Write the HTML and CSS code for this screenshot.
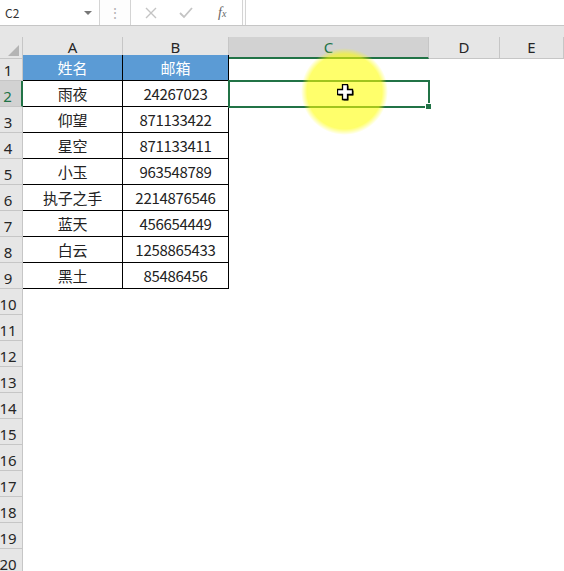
FILE: index.html
```html
<!DOCTYPE html>
<html lang="zh-CN">
<head>
    <meta charset="UTF-8">
    <title>邮箱表</title>
    <link rel="stylesheet" href="styles.css">
</head>
<body>
    <div class="formula-bar">
        <div class="name-box">
            <span>C2</span>
            <span class="caret"></span>
        </div>
        <div class="grip">⋮</div>
        <div class="fx-buttons">
            <svg class="icon" width="12" height="12" viewBox="0 0 12 12"><path d="M1 1 L11 11 M11 1 L1 11" stroke="#c4c4c4" stroke-width="1.4" fill="none"/></svg>
            <svg class="icon" width="14" height="12" viewBox="0 0 14 12"><path d="M1 6 L5 10 L13 1" stroke="#c4c4c4" stroke-width="1.8" fill="none"/></svg>
            <span class="fx">f<sub>x</sub></span>
        </div>
        <div class="formula-input"></div>
    </div>

    <div class="sheet">
        <div class="row head">
            <div class="corner"><span class="tri"></span></div>
            <div class="col">A</div>
            <div class="col">B</div>
            <div class="col sel">C</div>
            <div class="col">D</div>
            <div class="col">E</div>
        </div>
        <div class="row">
            <div class="num">1</div>
            <div class="cell th">姓名</div>
            <div class="cell th">邮箱</div>
            <div class="cell"></div><div class="cell"></div><div class="cell"></div>
        </div>
        <div class="row">
            <div class="num sel">2</div>
            <div class="cell td">雨夜</div>
            <div class="cell td">24267023</div>
            <div class="cell active"></div><div class="cell"></div><div class="cell"></div>
        </div>
        <div class="row">
            <div class="num">3</div>
            <div class="cell td">仰望</div>
            <div class="cell td">871133422</div>
            <div class="cell"></div><div class="cell"></div><div class="cell"></div>
        </div>
        <div class="row">
            <div class="num">4</div>
            <div class="cell td">星空</div>
            <div class="cell td">871133411</div>
            <div class="cell"></div><div class="cell"></div><div class="cell"></div>
        </div>
        <div class="row">
            <div class="num">5</div>
            <div class="cell td">小玉</div>
            <div class="cell td">963548789</div>
            <div class="cell"></div><div class="cell"></div><div class="cell"></div>
        </div>
        <div class="row">
            <div class="num">6</div>
            <div class="cell td">执子之手</div>
            <div class="cell td">2214876546</div>
            <div class="cell"></div><div class="cell"></div><div class="cell"></div>
        </div>
        <div class="row">
            <div class="num">7</div>
            <div class="cell td">蓝天</div>
            <div class="cell td">456654449</div>
            <div class="cell"></div><div class="cell"></div><div class="cell"></div>
        </div>
        <div class="row">
            <div class="num">8</div>
            <div class="cell td">白云</div>
            <div class="cell td">1258865433</div>
            <div class="cell"></div><div class="cell"></div><div class="cell"></div>
        </div>
        <div class="row">
            <div class="num">9</div>
            <div class="cell td">黑土</div>
            <div class="cell td">85486456</div>
            <div class="cell"></div><div class="cell"></div><div class="cell"></div>
        </div>
        <div class="row"><div class="num">10</div></div>
        <div class="row"><div class="num">11</div></div>
        <div class="row"><div class="num">12</div></div>
        <div class="row"><div class="num">13</div></div>
        <div class="row"><div class="num">14</div></div>
        <div class="row"><div class="num">15</div></div>
        <div class="row"><div class="num">16</div></div>
        <div class="row"><div class="num">17</div></div>
        <div class="row"><div class="num">18</div></div>
        <div class="row"><div class="num">19</div></div>
        <div class="row"><div class="num">20</div></div>
    </div>

    <!-- click highlight + cursor from the screen recording -->
    <div class="spot"></div>
    <svg class="cursor" width="17" height="17" viewBox="0 0 17 17">
        <path d="M6.5 1.5 h5 v5 h5 v5 h-5 v5 h-5 v-5 h-5 v-5 h5 z" fill="#000"/>
        <path d="M5.5 0.5 h5 v5 h5 v5 h-5 v5 h-5 v-5 h-5 v-5 h5 z" fill="#fff" stroke="#000" stroke-width="1.3"/>
    </svg>
</body>
</html>
```

FILE: styles.css
```css
body {
    margin: 0;
    width: 564px;
    height: 571px;
    overflow: hidden;
    position: relative;
    background-color: #fff;
    font-family: "Noto Sans CJK SC", "Noto Sans", sans-serif;
    color: #222;
}

/* formula bar */
.formula-bar {
    display: flex;
    height: 25px;
    border-bottom: 1px solid #c6c6c6;
    background-color: #fdfdfd;
}

.name-box {
    width: 100px;
    border-right: 1px solid #d4d4d4;
    background-color: #fff;
    display: flex;
    align-items: center;
    justify-content: space-between;
    padding: 0 7px 0 5px;
    box-sizing: border-box;
    font-size: 12px;
    color: #333;
}

.caret {
    width: 0;
    height: 0;
    border-left: 4px solid transparent;
    border-right: 4px solid transparent;
    border-top: 4px solid #777;
}

.grip {
    width: 30px;
    text-align: center;
    line-height: 25px;
    font-size: 14px;
    color: #b4b4b4;
}

.fx-buttons {
    width: 113px;
    box-sizing: border-box;
    border-left: 1px solid #d4d4d4;
    border-right: 1px solid #d4d4d4;
    background-color: #fff;
    display: flex;
    align-items: center;
    gap: 22px;
    padding-left: 14px;
}

.fx {
    font-family: "Liberation Serif", serif;
    font-style: italic;
    font-size: 14px;
    color: #666;
    margin-left: 3px;
}

.fx sub {
    font-size: 10px;
    vertical-align: 0;
}

.formula-input {
    flex: 1;
    margin-left: 2px;
    border-left: 1px solid #d4d4d4;
    background-color: #fff;
}

/* sheet grid */
.sheet {
    padding-top: 11px;
    background: linear-gradient(#e6e6e6 0, #e6e6e6 29px, #fff 29px);
}

.row {
    display: grid;
    grid-template-columns: 23px 100px 106px 200px 71px 1fr;
    height: 26px;
}

.row.head {
    height: 18px;
}

.corner {
    position: relative;
    border-right: 1px solid #c6c6c6;
    border-bottom: 1px solid #c6c6c6;
}

.tri {
    position: absolute;
    right: 3px;
    bottom: 2px;
    width: 0;
    height: 0;
    border-left: 11px solid transparent;
    border-bottom: 11px solid #b4b4b4;
}

.col {
    background-color: #e6e6e6;
    border-right: 1px solid #c6c6c6;
    border-bottom: 1px solid #c6c6c6;
    font-family: "Noto Sans", sans-serif;
    font-size: 15px;
    line-height: 20px;
    text-align: center;
    color: #262626;
}

.col.sel {
    background-color: #d2d2d2;
    border-bottom: 2px solid #217346;
    color: #217346;
}

.num {
    background-color: #e6e6e6;
    border-right: 1px solid #c6c6c6;
    border-bottom: 1px solid #c6c6c6;
    font-family: "Noto Sans", sans-serif;
    font-size: 15px;
    line-height: 15px;
    display: flex;
    align-items: flex-end;
    justify-content: center;
    padding-right: 6px;
    padding-bottom: 2px;
    box-sizing: border-box;
    color: #262626;
}

.num.sel {
    background-color: #d2d2d2;
    border-right: 2px solid #217346;
    color: #217346;
}

.cell {
    font-size: 15px;
    display: flex;
    align-items: center;
    justify-content: center;
}

.th {
    background-color: #5b9bd5;
    color: #fff;
    border-right: 1px solid #000;
    border-bottom: 1px solid #000;
}

.td {
    border-right: 1px solid #000;
    border-bottom: 1px solid #000;
    letter-spacing: -0.3px;
}

.active {
    position: relative;
}

.active::after {
    content: "";
    position: absolute;
    top: -1px;
    left: -1px;
    right: -1px;
    bottom: -1px;
    border: 2px solid #217346;
}

.active::before {
    content: "";
    position: absolute;
    right: -3px;
    bottom: -3px;
    width: 5px;
    height: 5px;
    background-color: #217346;
    border: 1px solid #fff;
    z-index: 1;
}

.spot {
    position: absolute;
    left: 301px;
    top: 48px;
    width: 87px;
    height: 87px;
    border-radius: 50%;
    background: radial-gradient(circle closest-side, rgba(255, 255, 0, 0.58) 0, rgba(255, 255, 0, 0.58) 86%, rgba(255, 255, 0, 0) 100%);
}

.cursor {
    position: absolute;
    left: 337px;
    top: 84px;
}
```
